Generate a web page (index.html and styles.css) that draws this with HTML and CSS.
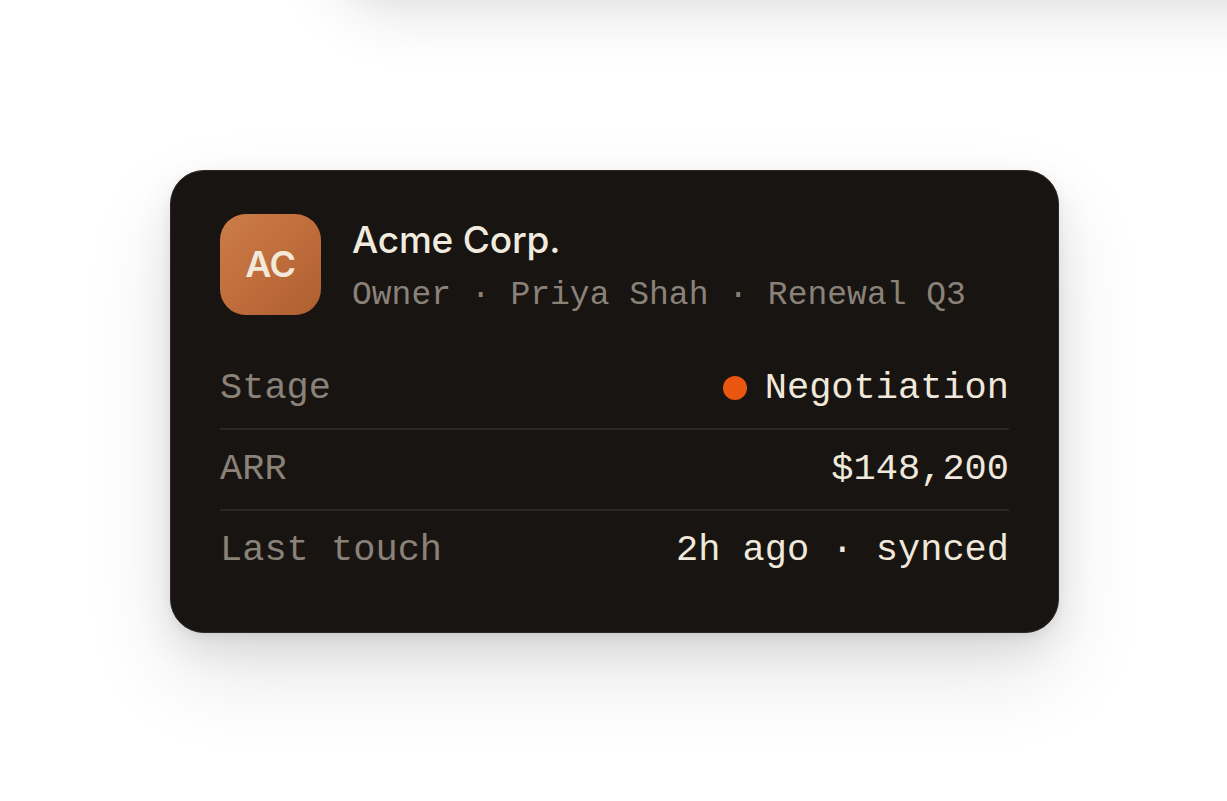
FILE: index.html
```html
<!DOCTYPE html>
<html lang="en">
<head>
<meta charset="utf-8">
<title>Acme Corp.</title>
<link rel="stylesheet" href="styles.css">
</head>
<body>
<div class="ghost" aria-hidden="true"></div>
<main class="stage">
  <section class="card">
    <header class="head">
      <div class="avatar">AC</div>
      <div class="ident">
        <h1 class="name">Acme Corp.</h1>
        <p class="meta">Owner · Priya Shah · Renewal Q3</p>
      </div>
    </header>
    <div class="rows">
      <div class="row">
        <span class="label">Stage</span>
        <span class="value"><span class="dot"></span>Negotiation</span>
      </div>
      <div class="row">
        <span class="label">ARR</span>
        <span class="value">$148,200</span>
      </div>
      <div class="row">
        <span class="label">Last touch</span>
        <span class="value">2h ago · synced</span>
      </div>
    </div>
  </section>
</main>
</body>
</html>
```

FILE: styles.css
```css
* { box-sizing: border-box; }

html, body {
  margin: 0;
  padding: 0;
  background: #ffffff;
  overflow: hidden;
}

body {
  position: relative;
  min-height: 100vh;
}

.ghost {
  position: absolute;
  top: -300px;
  left: 320px;
  width: 1100px;
  height: 300px;
  border-radius: 80px;
  background: #ffffff;
  box-shadow: 0 20px 60px rgba(0, 0, 0, 0.09), 0 6px 24px rgba(0, 0, 0, 0.04);
}

.stage {
  min-height: 100vh;
  display: flex;
  align-items: center;
  justify-content: center;
  padding-left: 2px;
  padding-top: 2px;
}

.card {
  width: 889px;
  background: #181411;
  border: 1px solid #2d2824;
  border-radius: 34px;
  padding: 41px 49px 42px;
  box-shadow:
    0 40px 90px rgba(0, 0, 0, 0.11),
    0 16px 36px rgba(0, 0, 0, 0.08),
    0 4px 10px rgba(0, 0, 0, 0.06);
}

.head {
  display: flex;
  align-items: center;
  gap: 31px;
}

.avatar {
  width: 101px;
  height: 101px;
  flex: none;
  border-radius: 26px;
  background: linear-gradient(135deg, #cc7d48 0%, #c06d3c 50%, #ae5e30 100%);
  color: #f2e9da;
  font-family: Inter, "Liberation Sans", sans-serif;
  font-weight: 600;
  font-size: 36px;
  letter-spacing: -0.01em;
  display: flex;
  align-items: center;
  justify-content: center;
}

.ident {
  display: flex;
  flex-direction: column;
  gap: 14px;
  padding-top: 6px;
}

.name {
  margin: 0;
  font-family: Inter, "Liberation Sans", sans-serif;
  font-weight: 500;
  font-size: 37px;
  line-height: 44px;
  letter-spacing: -0.005em;
  color: #f1ebdf;
}

.meta {
  margin: 0;
  font-family: "Liberation Mono", "DejaVu Sans Mono", monospace;
  font-size: 33px;
  line-height: 40px;
  color: #8a8278;
}

.rows {
  margin-top: 33px;
  display: flex;
  flex-direction: column;
}

.row {
  display: flex;
  align-items: center;
  justify-content: space-between;
  padding: 17px 0 18px;
  font-family: "Liberation Mono", "DejaVu Sans Mono", monospace;
  font-size: 37px;
  line-height: 44px;
}

.row + .row {
  border-top: 2px solid #2c2723;
}

.label {
  color: #8a8278;
}

.value {
  color: #efe8db;
  display: flex;
  align-items: center;
  gap: 18px;
}

.dot {
  width: 24px;
  height: 24px;
  border-radius: 50%;
  background: #e8560f;
  flex: none;
}
```
